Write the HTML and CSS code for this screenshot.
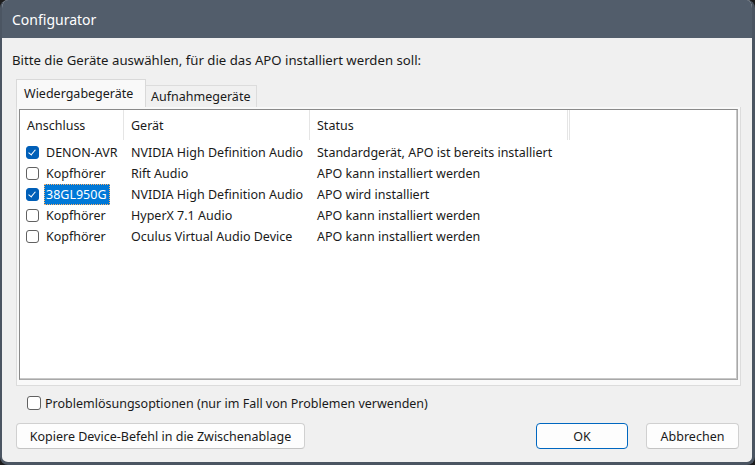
FILE: index.html
```html
<!DOCTYPE html>
<html lang="de">
<head>
    <meta charset="UTF-8">
    <title>Configurator</title>
    <link rel="stylesheet" href="styles.css">
</head>
<body>

    <div class="window">
        <div class="titlebar">Configurator</div>

        <div class="content">
            <p class="intro">Bitte die Geräte auswählen, für die das APO installiert werden soll:</p>

            <!-- TABS -->
            <div class="tabs">
                <div class="tab active">Wiedergabegeräte</div>
                <div class="tab">Aufnahmegeräte</div>
            </div>

            <div class="panel">
                <div class="list">
                    <div class="list-head">
                        <div class="col c1">Anschluss</div>
                        <div class="col c2">Gerät</div>
                        <div class="col c3">Status</div>
                        <div class="col c4"></div>
                    </div>

                    <div class="row">
                        <div class="c1 cell"><span class="check on"></span><span class="name">DENON-AVR</span></div>
                        <div class="c2 cell">NVIDIA High Definition Audio</div>
                        <div class="c3 cell">Standardgerät, APO ist bereits installiert</div>
                    </div>
                    <div class="row">
                        <div class="c1 cell"><span class="check"></span><span class="name">Kopfhörer</span></div>
                        <div class="c2 cell">Rift Audio</div>
                        <div class="c3 cell">APO kann installiert werden</div>
                    </div>
                    <div class="row">
                        <div class="c1 cell"><span class="check on"></span><span class="name selected">38GL950G</span></div>
                        <div class="c2 cell">NVIDIA High Definition Audio</div>
                        <div class="c3 cell">APO wird installiert</div>
                    </div>
                    <div class="row">
                        <div class="c1 cell"><span class="check"></span><span class="name">Kopfhörer</span></div>
                        <div class="c2 cell">HyperX 7.1 Audio</div>
                        <div class="c3 cell">APO kann installiert werden</div>
                    </div>
                    <div class="row">
                        <div class="c1 cell"><span class="check"></span><span class="name">Kopfhörer</span></div>
                        <div class="c2 cell">Oculus Virtual Audio Device</div>
                        <div class="c3 cell">APO kann installiert werden</div>
                    </div>
                </div>
            </div>

            <label class="option"><span class="check"></span>Problemlösungsoptionen (nur im Fall von Problemen verwenden)</label>

            <div class="buttons">
                <button class="btn wide">Kopiere Device-Befehl in die Zwischenablage</button>
                <div class="spacer"></div>
                <button class="btn default">OK</button>
                <button class="btn">Abbrechen</button>
            </div>
        </div>
    </div>

</body>
</html>
```

FILE: styles.css
```css
html, body {
    margin: 0;
    padding: 0;
    background: #1c1c1c;
}
body {
    font-family: 'Noto Sans', sans-serif;
    font-size: 12.5px;
    color: #1a1a1a;
}
.window {
    width: 755px;
    height: 465px;
    box-sizing: border-box;
    background: #f0f0f0;
    border-radius: 8px;
    border-left: 2px solid #4b5562;
    border-right: 3px solid #4b5562;
    border-bottom: 3px solid #4b5562;
    overflow: hidden;
    display: flex;
    flex-direction: column;
}
.titlebar {
    height: 38px;
    background: #525d6b;
    color: #ffffff;
    font-size: 14px;
    line-height: 40px;
    padding-left: 10px;
    flex: none;
}
.content {
    flex: 1;
    padding: 0 11px 0 14px;
    display: flex;
    flex-direction: column;
}
.intro {
    margin: 12px 0 0 -4px;
    height: 20px;
    line-height: 20px;
    font-size: 13.2px;
}
.tabs {
    display: flex;
    align-items: flex-end;
    margin-top: 9px;
    height: 28px;
}
.tab {
    height: 22px;
    line-height: 21px;
    padding: 0 6px;
    border: 1px solid #dcdcdc;
    border-bottom: none;
    background: #f0f0f0;
    box-sizing: border-box;
    white-space: nowrap;
}
.tab.active {
    height: 28px;
    line-height: 27px;
    width: 130px;
    padding: 0 0 0 7px;
    background: #f9f9f9;
    border-color: #d9d9d9;
}
.tab + .tab {
    border-left: none;
    width: 111px;
    padding-left: 5px;
}
.panel {
    height: 279px;
    box-sizing: border-box;
    background: #f9f9f9;
    border: 1px solid #dcdcdc;
    border-top: none;
    padding: 2px 2px 5px 2px;
}
.list {
    height: 100%;
    box-sizing: border-box;
    background: #ffffff;
    border: 1px solid #8a8a8a;
    border-right-color: #a8a8a8;
    border-bottom-color: #a8a8a8;
    box-shadow: inset -1px -1px 0 #c8c8c8;
}
.list-head {
    display: flex;
    height: 32px;
}
.col {
    box-sizing: border-box;
    line-height: 31px;
    height: 30px;
    padding-left: 7px;
    border-right: 1px solid #e5e5e5;
}
.c1 { width: 104px; }
.c2 { width: 186px; }
.c3 { width: 258px; }
.col.c4 { width: 2px; padding: 0; }
.row {
    display: flex;
    height: 21px;
    line-height: 21px;
}
.cell {
    box-sizing: border-box;
    padding-left: 7px;
    white-space: nowrap;
}
.row .c1 {
    display: flex;
    align-items: center;
    padding-left: 6px;
}
.check {
    width: 13px;
    height: 13px;
    box-sizing: border-box;
    border: 1px solid #616161;
    border-radius: 3px;
    background: #ffffff;
    margin-right: 6px;
    flex: none;
    display: inline-block;
    position: relative;
}
.check.on {
    background: #005fb8;
    border-color: #005fb8;
}
.check.on::after {
    content: "";
    position: absolute;
    left: 3px;
    top: 1px;
    width: 3px;
    height: 6px;
    border: solid #ffffff;
    border-width: 0 1px 1px 0;
    transform: rotate(40deg);
}
.name {
    padding: 0 2px 0 1px;
    line-height: 19px;
    margin-left: -1px;
    border: 1px dotted transparent;
}
.name.selected {
    background: #0078d7;
    color: #ffffff;
    border-color: #ffb36b;
}
.option {
    display: flex;
    align-items: center;
    margin-top: 8px;
    margin-left: 11px;
    height: 18px;
}
.option .check {
    width: 14px;
    height: 14px;
    margin-right: 4px;
}
.buttons {
    display: flex;
    margin-top: 11px;
    margin-right: 2px;
}
.spacer {
    flex: 1;
}
button {
    font-family: 'Noto Sans', sans-serif;
    font-size: 12.5px;
    color: #1a1a1a;
    height: 26px;
    background: #fdfdfd;
    border: 1px solid #d0d0d0;
    border-bottom-color: #c4c4c4;
    border-radius: 4px;
    padding: 0;
}
.btn {
    width: 93px;
}
.btn.wide {
    width: 289px;
}
.btn.default {
    width: 92px;
    border-color: #0067c0;
    margin-right: 18px;
}
```
